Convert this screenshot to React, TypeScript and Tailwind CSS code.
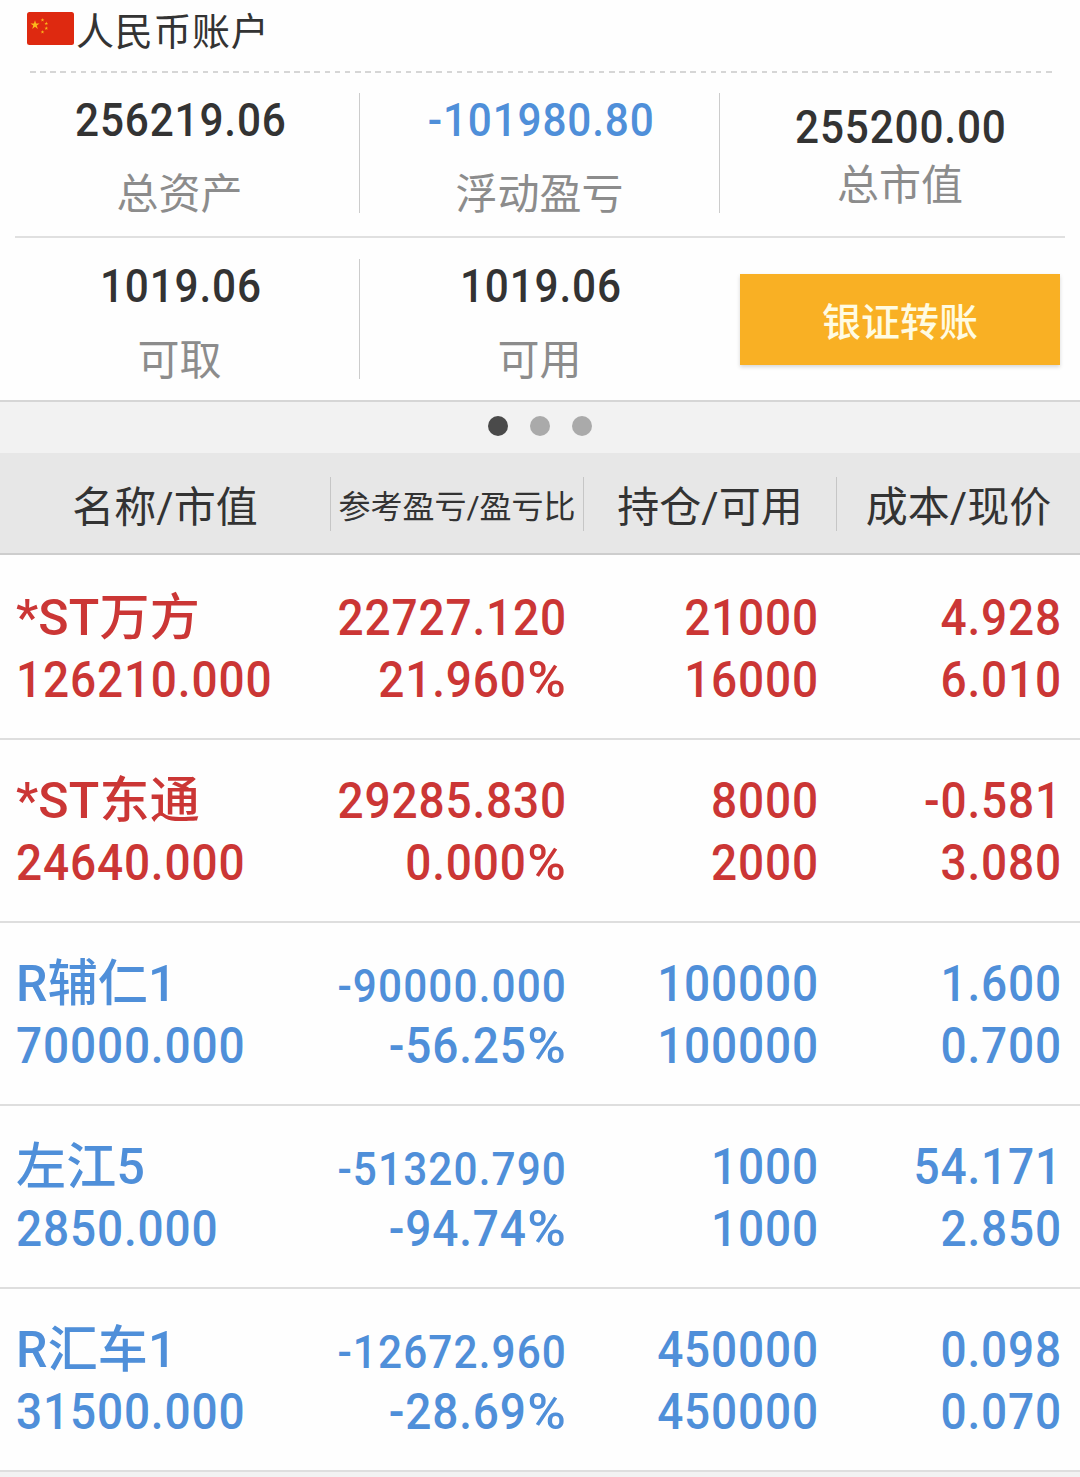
import clsx from "clsx";

type Holding = {
  name: string;
  marketValue: string;
  profit: string;
  profitRate: string;
  position: string;
  available: string;
  cost: string;
  price: string;
  trend: "up" | "down";
};

const holdings: Holding[] = [
  {
    name: "*ST万方",
    marketValue: "126210.000",
    profit: "22727.120",
    profitRate: "21.960",
    position: "21000",
    available: "16000",
    cost: "4.928",
    price: "6.010",
    trend: "up",
  },
  {
    name: "*ST东通",
    marketValue: "24640.000",
    profit: "29285.830",
    profitRate: "0.000",
    position: "8000",
    available: "2000",
    cost: "-0.581",
    price: "3.080",
    trend: "up",
  },
  {
    name: "R辅仁1",
    marketValue: "70000.000",
    profit: "-90000.000",
    profitRate: "-56.25",
    position: "100000",
    available: "100000",
    cost: "1.600",
    price: "0.700",
    trend: "down",
  },
  {
    name: "左江5",
    marketValue: "2850.000",
    profit: "-51320.790",
    profitRate: "-94.74",
    position: "1000",
    available: "1000",
    cost: "54.171",
    price: "2.850",
    trend: "down",
  },
  {
    name: "R汇车1",
    marketValue: "31500.000",
    profit: "-12672.960",
    profitRate: "-28.69",
    position: "450000",
    available: "450000",
    cost: "0.098",
    price: "0.070",
    trend: "down",
  },
];

const STAR = "0,-1 0.225,-0.309 0.951,-0.309 0.363,0.118 0.588,0.809 0,0.382 -0.588,0.809 -0.363,0.118 -0.951,-0.309 -0.225,-0.309";

function ChinaFlag() {
  return (
    <svg className="h-[33px] w-[47px]" viewBox="0 0 47 33">
      <rect width="47" height="33" rx="2.5" fill="#de2910" />
      <g fill="#fbb91b">
        <polygon points={STAR} transform="translate(8 13) scale(4.8)" />
        <polygon points={STAR} transform="translate(15.5 8) scale(2)" />
        <polygon points={STAR} transform="translate(19.3 11.5) scale(2)" />
        <polygon points={STAR} transform="translate(19.3 16.3) scale(2)" />
        <polygon points={STAR} transform="translate(15.5 20) scale(2)" />
      </g>
    </svg>
  );
}

type StatProps = {
  value: string;
  label: string;
  negative?: boolean;
  compact?: boolean;
};

function Stat({ value, label, negative, compact }: StatProps) {
  return (
    <div
      className={clsx(
        "flex flex-col items-center",
        compact ? "w-[360px] gap-2 pt-[29px]" : "w-[359px] gap-6 pt-[22px]"
      )}
    >
      {/* Digits are slightly condensed */}
      <div
        className={clsx(
          "scale-x-[0.92] pl-[3px] text-[46px] leading-[51px] font-medium tracking-[0.9px]",
          negative ? "text-[#4f8fd9]" : "text-[#333333]"
        )}
      >
        {value}
      </div>
      <div className="text-[42px] leading-[50px] text-[#8c8c8c]">{label}</div>
    </div>
  );
}

function StatDivider() {
  return <div className="mt-5 h-[120px] w-px bg-[#cccccc]" />;
}

function ColumnDivider() {
  return <div className="h-[54px] w-px bg-[#c6c6c6]" />;
}

function HoldingRow({ item }: { item: Holding }) {
  const longProfit = item.profit.length > 9;

  return (
    <div
      className={clsx(
        "flex h-[183px] border-b-2 border-[#dedede] pt-[30px] text-[50px] leading-[62px] font-medium tracking-[0.9px]",
        item.trend === "up" ? "text-[#cb3635]" : "text-[#4f8fd9]"
      )}
    >
      <div className="w-[284px] pl-4">
        <div className="tracking-[0.2px]">{item.name}</div>
        <div className="origin-left scale-x-[0.92]">{item.marketValue}</div>
      </div>
      <div className="w-[283px] origin-right scale-x-[0.92] text-right">
        <div className={clsx(longProfit && "-mb-1 text-[46px] leading-[66px] tracking-[1.2px]")}>{item.profit}</div>
        <div>
          {item.profitRate}
          <span className="inline-block origin-right scale-x-[1.14] pl-1.5">%</span>
        </div>
      </div>
      <div className="w-[252px] origin-right scale-x-[0.92] text-right">
        <div>{item.position}</div>
        <div>{item.available}</div>
      </div>
      <div className="w-[243px] origin-right scale-x-[0.92] text-right">
        <div>{item.cost}</div>
        <div>{item.price}</div>
      </div>
    </div>
  );
}

export default function App() {
  return (
    <main className="h-[1477px] w-[1080px] overflow-hidden bg-[#f2f2f2] font-[Roboto,'Noto_Sans_CJK_SC',sans-serif]">
      {/* Account summary */}
      <section className="border-b-2 border-[#d6d6d6] bg-[#fefefe]">
        <div className="flex h-[71px] pl-[27px]">
          <div className="pt-3">
            <ChinaFlag />
          </div>
          <h1 className="pl-[2px] text-[38px] leading-[64px] tracking-[0.7px] text-[#333333]">人民币账户</h1>
        </div>
        <div className="mr-7 ml-[30px] h-0.5 bg-[repeating-linear-gradient(90deg,#d6d6d6_0_5.5px,transparent_5.5px_10.16px)]" />

        <div className="flex h-[163px]">
          <Stat value="256219.06" label="总资产" />
          <StatDivider />
          <Stat value="-101980.80" label="浮动盈亏" negative />
          <StatDivider />
          <Stat value="255200.00" label="总市值" compact />
        </div>
        <div className="mx-[15px] h-0.5 bg-[#e0e0e0]" />
        <div className="flex h-[162px] pt-px">
          <Stat value="1019.06" label="可取" />
          <StatDivider />
          <Stat value="1019.06" label="可用" />
          <div className="w-[361px] pt-[35px] pr-5 pl-[21px]">
            <button className="h-[91px] w-full bg-[#f9b024] pt-2 text-[39px] leading-none font-medium text-[#fffbe2] shadow-[0_2px_4px_rgba(0,0,0,0.16)]">
              银证转账
            </button>
          </div>
        </div>
      </section>

      {/* Pager */}
      <div className="flex h-[51px] justify-center gap-[22px] pt-3.5 pr-px">
        <span className="size-5 rounded-full bg-[#4a4a4a]" />
        <span className="size-5 rounded-full bg-[#aaaaaa]" />
        <span className="size-5 rounded-full bg-[#aaaaaa]" />
      </div>

      {/* Holdings table */}
      <div className="flex h-[102px] items-start border-b-2 border-[#cdcdcd] bg-[#e7e7e7] pt-6 text-center text-[42px] leading-[62px] text-[#333333]">
        <div className="w-[330px]">名称/市值</div>
        <ColumnDivider />
        <div className="w-[252px] text-[32px] leading-[60px]">参考盈亏/盈亏比</div>
        <ColumnDivider />
        <div className="w-[252px]">持仓/可用</div>
        <ColumnDivider />
        <div className="flex-1 whitespace-nowrap">成本/现价</div>
      </div>
      <section className="bg-[#fefefe] pt-0.5">
        {holdings.map((item) => (
          <HoldingRow key={item.name} item={item} />
        ))}
      </section>
    </main>
  );
}
